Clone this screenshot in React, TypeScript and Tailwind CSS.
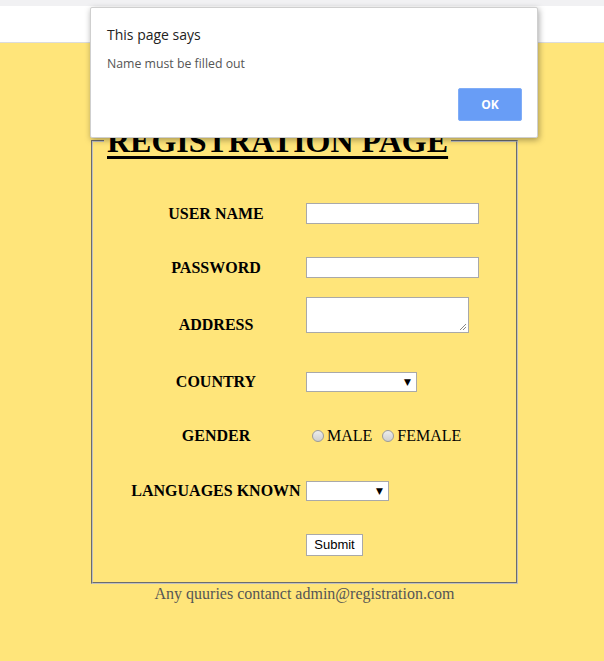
import React from "react";

function Select({ w, arrowRight }: { w: number; arrowRight: number }) {
  return (
    <div
      className="relative h-[20px] border border-[#a9a9a9] bg-white"
      style={{ width: w }}
    >
      <span
        className="absolute top-[4px] text-[9px] leading-[10px] text-black font-['DejaVu_Sans',sans-serif]"
        style={{ right: arrowRight }}
      >
        ▼
      </span>
    </div>
  );
}

function Radio() {
  return (
    <span className="inline-block h-[12px] w-[12px] rounded-full border border-[#9a9a9a] bg-[linear-gradient(#ececec,#cfcfcf)]" />
  );
}

export default function App() {
  const label = "text-center text-[16px] font-bold leading-[18px] text-black";
  return (
    <div className="relative h-[661px] w-[604px] overflow-hidden bg-[#ffe57a] font-['Liberation_Serif',serif]">
      <div className="h-[6px] bg-[#f1f1f3]" />
      <div className="h-[37px] border-b border-[#dcdcdc] bg-white" />

      <div className="ml-[91px] mt-[81px] w-[427px]">
        <fieldset className="m-0 border-2 border-[#c0c0c0] pb-[26px] pl-[11px] pr-[11px] [border-style:groove]">
          <legend className="px-[3px] text-[32px] font-bold leading-[34px] text-black underline decoration-[3px] underline-offset-[4px]">
            REGISTRATION PAGE
          </legend>
          <div className="ml-[26px] mt-[45px] flex flex-col">
            <div className="flex h-[21px] items-center">
              <div className={`w-[172px] ${label}`}>USER NAME</div>
              <div className="ml-[4px] h-[21px] w-[173px] border border-[#a9a9a9] bg-white" />
            </div>
            <div className="mt-[33px] flex h-[21px] items-center">
              <div className={`w-[172px] ${label}`}>PASSWORD</div>
              <div className="ml-[4px] h-[21px] w-[173px] border border-[#a9a9a9] bg-white" />
            </div>
            <div className="mt-[19px] flex h-[36px] items-start">
              <div className={`mt-[19px] w-[172px] ${label}`}>ADDRESS</div>
              <div className="relative ml-[4px] h-[36px] w-[163px] border border-[#a9a9a9] bg-white">
                <svg className="absolute bottom-[1px] right-[1px]" width="8" height="8" viewBox="0 0 8 8">
                  <line x1="1" y1="7" x2="7" y2="1" stroke="#888" strokeWidth="1" />
                  <line x1="4" y1="7" x2="7" y2="4" stroke="#888" strokeWidth="1" />
                </svg>
              </div>
            </div>
            <div className="mt-[39px] flex h-[20px] items-center">
              <div className={`w-[172px] ${label}`}>COUNTRY</div>
              <div className="ml-[4px]">
                <Select w={111} arrowRight={5} />
              </div>
            </div>
            <div className="mt-[34px] flex h-[20px] items-center">
              <div className={`w-[172px] ${label}`}>GENDER</div>
              <div className="ml-[10px] flex items-center text-[16px] leading-[18px] text-black">
                <Radio />
                <span className="ml-[3px]">MALE</span>
                <span className="ml-[10px] flex">
                  <Radio />
                </span>
                <span className="ml-[3px]">FEMALE</span>
              </div>
            </div>
            <div className="mt-[35px] flex h-[20px] items-center">
              <div className={`w-[172px] whitespace-nowrap ${label}`}>LANGUAGES KNOWN</div>
              <div className="ml-[4px]">
                <Select w={83} arrowRight={5} />
              </div>
            </div>
            <div className="mt-[33px] flex h-[22px] items-center">
              <div className="w-[172px]" />
              <div className="ml-[4px] flex h-[22px] w-[57px] items-center justify-center border border-[#a9a9a9] bg-white font-['Liberation_Sans',sans-serif] text-[13px] text-black">
                Submit
              </div>
            </div>
          </div>
        </fieldset>
        <div className="mt-[1px] text-center text-[16px] leading-[18px] text-[#555]">
          Any quuries contanct admin@registration.com
        </div>
      </div>

      <div className="absolute left-[90px] top-[7px] h-[131px] w-[448px] rounded-[2px] border border-[#cfcfcf] bg-white shadow-[1px_2px_6px_rgba(0,0,0,0.35)] font-['Open_Sans',sans-serif]">
        <div className="ml-[16px] mt-[17px] text-[14px] leading-[20px] text-[#222]">This page says</div>
        <div className="ml-[16px] mt-[11px] text-[12.3px] leading-[16px] text-[#555]">Name must be filled out</div>
        <div className="mr-[15px] mt-[16px] flex justify-end">
          <div className="flex h-[33px] w-[64px] items-center justify-center rounded-[2px] border border-[#80adf7] bg-[#689df6] text-[12px] font-bold text-white">
            OK
          </div>
        </div>
      </div>
    </div>
  );
}
